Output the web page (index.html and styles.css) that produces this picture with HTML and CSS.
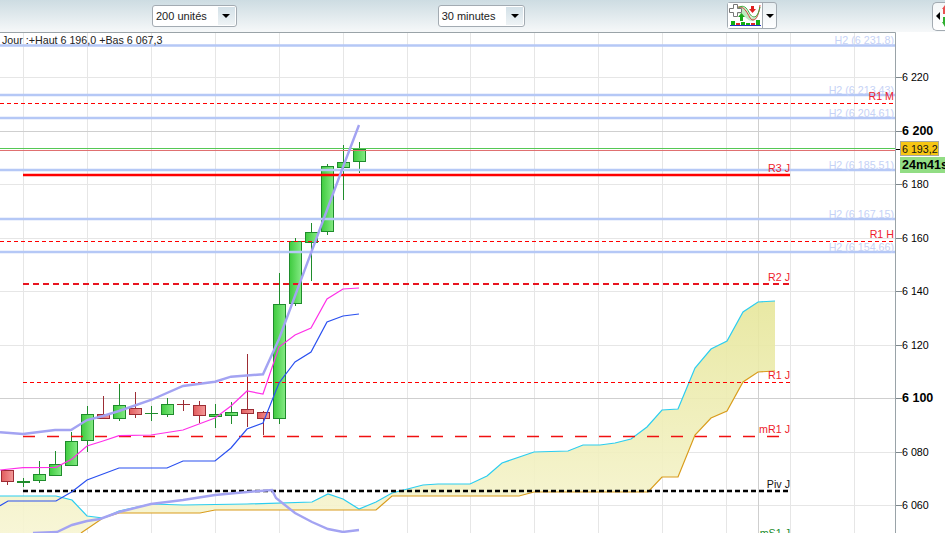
FILE: index.html
```html
<!DOCTYPE html>
<html lang="fr">
<head>
    <meta charset="UTF-8">
    <title>Graphique 30 minutes</title>
    <link rel="stylesheet" href="styles.css">
</head>
<body>
    <!-- Toolbar -->
    <div class="toolbar">
        <div class="select select-units">
            <span>200 unités</span>
            <span class="select-arrow"><i class="caret"></i></span>
        </div>
        <div class="select select-period">
            <span>30 minutes</span>
            <span class="select-arrow"><i class="caret"></i></span>
        </div>
        <div class="indicator-btn">
            <svg class="indicator-icon" width="34" height="25" viewBox="728 4 34 25">
                <path class="ic-area" d="M733 12 C736 6 741 6 745 9 C748 12 750 20 754 19 C757 18 759 12 760 6 L760 10 C758 17 756 22 752 22 C747 22 745 16 741 15 C738 14 735 15 733 17 Z"/>
                <path class="ic-red" d="M736 9 C740 7 743 8 746 12 C749 16 750 21 753 21 C757 21 759 14 760 6"/>
                <path class="ic-green" d="M736 12 C739 7 743 6 746 9 C749 12 750 18 754 18 C757 18 759 13 760 8"/>
                <path class="ic-plus" d="M733.5 5.5 H737.5 V9.5 H741.5 V13.5 H737.5 V17.5 H733.5 V13.5 H729.5 V9.5 H733.5 Z"/>
                <path class="ic-up" d="M741.5 14 L745 18 H743 V22 H740 V18 H738 Z"/>
                <path class="ic-down" d="M751 7 H754 V10 H756 L752.5 14 L749 10 H751 Z"/>
                <rect class="ic-bar-g" x="731" y="22" width="4" height="4"/>
                <rect class="ic-bar-r" x="736" y="24" width="4" height="2"/>
                <rect class="ic-bar-g" x="741" y="23" width="4" height="3"/>
                <rect class="ic-bar-g" x="746" y="24" width="4" height="2"/>
                <rect class="ic-bar-r" x="751" y="24" width="4" height="2"/>
                <rect class="ic-bar-g" x="756" y="21" width="4" height="5"/>
                <rect class="ic-base" x="730" y="26" width="31" height="1"/>
            </svg>
            <span class="indicator-arrow"><i class="caret"></i></span>
        </div>
        <div class="corner-btn">
            <i class="caret-left"></i>
            <svg class="corner-icon" width="6" height="22" viewBox="0 0 6 22">
                <path class="corner-red" d="M3 0 L6 4 V9 H1 V4 H0 Z"/>
                <path class="corner-green" d="M1 12 H6 V17 L3 22 L0 17 H1 Z"/>
            </svg>
        </div>
    </div>

    <!-- Chart -->
    <svg class="chart" width="945" height="501" viewBox="0 32 945 501">
        <defs>
            <linearGradient id="cloud-fill" gradientUnits="userSpaceOnUse" x1="0" y1="300" x2="0" y2="533">
                <stop offset="0" stop-color="#e6e69a"/>
                <stop offset="1" stop-color="#f7f5d2"/>
            </linearGradient>
            <linearGradient id="candle-up">
                <stop offset="0" stop-color="#3fcb3f"/>
                <stop offset="1" stop-color="#84ea84"/>
            </linearGradient>
            <linearGradient id="candle-down">
                <stop offset="0" stop-color="#e25c5c"/>
                <stop offset="1" stop-color="#f39a9a"/>
            </linearGradient>
        </defs>

        <!-- grid -->
        <g class="grid">
            <path d="M23.5 33V533 M87.5 33V533 M151.5 33V533 M215.5 33V533 M279.5 33V533 M343.5 33V533 M407.5 33V533 M470.5 33V533 M534.5 33V533 M598.5 33V533 M662.5 33V533 M726.5 33V533 M790.5 33V533 M854.5 33V533"/>
            <path d="M0 77.5H895 M0 184.5H895 M0 238.5H895 M0 291.5H895 M0 345.5H895 M0 452.5H895 M0 505.5H895"/>
        </g>
        <path class="grid-strong" d="M758.5 33V533 M0 131.5H895 M0 398.5H895"/>

        <!-- ichimoku cloud -->
        <polygon class="cloud" points="0,496 56,496 72,500 87,516 103,518 119,511 151,504 183,505 247,504 312,502 328,494 343,499 359,509 376,502 392,493 423,485 438,484 470,484 487,476 502,463 534,452 568,451 583,445 600,445 615,443 631,439 647,427 662,410 678,409 695,368 711,349 727,341 743,312 758,302 775,301 775,371 758,372 743,382 727,411 711,418 695,435 678,477 662,477 648,492 534,492 519,496 392,496 376,510 215,510 200,513 119,513 103,518 81,533 0,533"/>
        <polyline class="kumo-top" points="0,496 56,496 72,500 87,516 103,518 119,511 151,504 183,505 247,504 312,502 328,494 343,499 359,509 376,502 392,493 423,485 438,484 470,484 487,476 502,463 534,452 568,451 583,445 600,445 615,443 631,439 647,427 662,410 678,409 695,368 711,349 727,341 743,312 758,302 775,301"/>
        <polyline class="kumo-bottom" points="81,533 103,518 119,513 200,513 215,510 376,510 392,496 519,496 534,492 648,492 662,477 678,477 695,435 711,418 727,411 743,382 758,372 775,371"/>

        <!-- candles -->
        <g class="wicks-up">
            <path d="M23.5 478V487 M39.5 461V483 M55.5 451V465 M71.5 432V442 M87.5 406V452 M119.5 384V421 M151.5 406V421 M167.5 398V417 M215.5 404V428 M231.5 402V424 M279.5 273V424 M295.5 238V306 M311.5 223V281 M327.5 164V235 M343.5 145V200 M359.5 142V173"/>
        </g>
        <g class="wicks-down">
            <path d="M7.5 481V485 M103.5 396V415 M135.5 392V418 M183.5 400V411 M199.5 401V423 M247.5 354V427 M263.5 411V435"/>
        </g>
        <g class="bodies-up">
            <rect x="17.5" y="481.5" width="12" height="1"/>
            <rect x="33.5" y="474.5" width="12" height="6"/>
            <rect x="49.5" y="464.5" width="12" height="11"/>
            <rect x="65.5" y="441.5" width="12" height="24"/>
            <rect x="81.5" y="414.5" width="12" height="26"/>
            <rect x="113.5" y="405.5" width="12" height="13"/>
            <rect x="161.5" y="404.5" width="12" height="10"/>
            <rect x="209.5" y="414.5" width="12" height="2"/>
            <rect x="225.5" y="412.5" width="12" height="3"/>
            <rect x="273.5" y="304.5" width="12" height="114"/>
            <rect x="289.5" y="241.5" width="12" height="62"/>
            <rect x="305.5" y="232.5" width="12" height="10"/>
            <rect x="321.5" y="166.5" width="12" height="65"/>
            <rect x="337.5" y="162.5" width="12" height="5"/>
            <rect x="353.5" y="149.5" width="12" height="12"/>
        </g>
        <g class="bodies-down">
            <rect x="1.5" y="470.5" width="12" height="11"/>
            <rect x="97.5" y="414.5" width="12" height="4"/>
            <rect x="129.5" y="408.5" width="12" height="6"/>
            <rect x="193.5" y="405.5" width="12" height="10"/>
            <rect x="241.5" y="409.5" width="12" height="4"/>
            <rect x="257.5" y="412.5" width="12" height="6"/>
        </g>
        <path class="wicks-up" d="M145 413.5H158"/>
        <path class="wicks-down" d="M177 404.5H190"/>

        <!-- levels -->
        <path class="h2-line" d="M0 45.5H895 M0 95H895 M0 118H895 M0 170H895 M0 219H895 M0 252H895"/>
        <path class="level-fine" d="M0 103.5H895 M0 241.5H895 M23 382.5H790"/>
        <path class="price-green" d="M0 148.5H895"/>
        <path class="price-red" d="M0 150.5H895"/>
        <path class="level-r3" d="M23 175H790"/>
        <path class="level-r2" d="M23 284H790"/>
        <path class="level-mr1" d="M23 436.5H780"/>
        <path class="level-piv" d="M23 491H790"/>

        <!-- indicators -->
        <polyline class="line-kijun" points="0,505.7 8,501 56,501 72,491.7 87,480 119,468 167,468 183,461 215,461 231,448 247,429 263,423 279,383 295,362 311,352 327,322 343,316 359,314"/>
        <polyline class="line-tenkan" points="0,470 23,467.7 56,467.3 72,459 87,446 103,441 119,435.7 151,435 183,430 215,418 231,406 247,391 263,394 279,347 295,335 311,328 327,299 343,289 359,288"/>
        <polyline class="line-chikou" points="0,432.3 23,434 55,430 71,430 87,420 103,416 119,411 151,400 183,386 215,381.7 231,376.7 263,374.3 279,339 295,296 311,253 327,210 343,167 359,125"/>
        <polyline class="line-chikou" points="33,533 57,532 72,525 87,521 100,519 119,512 151,504 183,500 215,495 247,492 272,490 276,498 295,513 312,522 328,529 343,532 359,530"/>

        <!-- chart text -->
        <text class="info" x="2" y="44">Jour :+Haut 6 196,0 +Bas 6 067,3</text>
        <g class="lbl-h2">
            <text x="894" y="44">H2 (6 231,8)</text>
            <text x="894" y="94">H2 (6 213,43)</text>
            <text x="894" y="117">H2 (6 204,61)</text>
            <text x="894" y="169">H2 (6 185,51)</text>
            <text x="894" y="218">H2 (6 167,15)</text>
            <text x="894" y="251">H2 (6 154,66)</text>
        </g>
        <g class="lbl-red">
            <text x="894" y="100">R1 M</text>
            <text x="790" y="172">R3 J</text>
            <text x="894" y="238">R1 H</text>
            <text x="790" y="281">R2 J</text>
            <text x="790" y="379">R1 J</text>
            <text x="790" y="433">mR1 J</text>
        </g>
        <text class="lbl-piv" x="790" y="488">Piv J</text>
        <text class="lbl-ms1" x="790" y="537">mS1 J</text>

        <!-- price axis -->
        <path class="axis" d="M0 32.5H895.5V533"/>
        <path class="ticks" d="M896 77.5H902 M896 131.5H902 M896 184.5H902 M896 238.5H902 M896 291.5H902 M896 345.5H902 M896 398.5H902 M896 452.5H902 M896 505.5H902"/>
        <g class="axis-labels">
            <text x="902" y="81">6 220</text>
            <text class="major" x="902" y="135">6 200</text>
            <text x="902" y="188">6 180</text>
            <text x="902" y="242">6 160</text>
            <text x="902" y="295">6 140</text>
            <text x="902" y="349">6 120</text>
            <text class="major" x="902" y="402">6 100</text>
            <text x="902" y="456">6 080</text>
            <text x="902" y="509">6 060</text>
        </g>
        <path class="tick-price" d="M896 149.5H901"/>
        <rect class="tag-price" x="900.5" y="141.5" width="38" height="14"/>
        <text class="tag-price-text" x="902" y="153">6 193,2</text>
        <rect class="tag-timer" x="900" y="157" width="45" height="16"/>
        <text class="tag-timer-text" x="902" y="169">24m41s</text>
    </svg>
</body>
</html>
```

FILE: styles.css
```css
/* Global Styles */
body {
    margin: 0;
    width: 945px;
    height: 533px;
    overflow: hidden;
    background: #fff;
    font-family: 'Liberation Sans', Arial, sans-serif;
    color: #222;
}

/* Toolbar */
.toolbar {
    display: flex;
    align-items: center;
    height: 32px;
    background: linear-gradient(to bottom, #cddce2, #f6f8f9);
}

.select {
    display: flex;
    align-items: center;
    justify-content: space-between;
    box-sizing: border-box;
    height: 22px;
    padding: 0 1px 0 3px;
    background: #fff;
    border: 1px solid #a3abb2;
    border-radius: 3px;
    font-size: 11px;
}

.select-units {
    width: 85px;
    margin-left: 152px;
}

.select-period {
    width: 88px;
    margin-left: 201px;
}

.select-arrow {
    display: flex;
    align-items: center;
    justify-content: center;
    width: 17px;
    height: 18px;
    background: linear-gradient(to bottom, #d3e1e8, #eef3f5);
}

.caret {
    width: 0;
    height: 0;
    border-left: 4px solid transparent;
    border-right: 4px solid transparent;
    border-top: 4px solid #000;
}

.indicator-btn {
    display: flex;
    align-items: stretch;
    box-sizing: border-box;
    width: 50px;
    height: 27px;
    margin-left: 202px;
    margin-bottom: 1px;
    background: linear-gradient(to bottom, #e8eff2, #fff);
    border: 1px solid #a3abb2;
    border-radius: 3px;
}

.indicator-icon {
    flex: none;
    background: #fff;
}

.indicator-arrow {
    display: flex;
    align-items: center;
    justify-content: center;
    flex: 1;
    border-left: 1px solid #a3abb2;
}

.ic-area { fill: #bfe9bf; }
.ic-red, .ic-green { fill: none; stroke-width: 1; }
.ic-red { stroke: #d84040; }
.ic-green { stroke: #3aa83a; }
.ic-plus { fill: #fff; stroke: #777; stroke-width: 1; }
.ic-up { fill: #18a818; }
.ic-down { fill: #e02020; }
.ic-bar-g { fill: #12b012; }
.ic-bar-r { fill: #e02828; }
.ic-base { fill: #2030c0; }

.corner-btn {
    display: flex;
    align-items: center;
    gap: 2px;
    box-sizing: border-box;
    width: 13px;
    height: 29px;
    margin-left: 155px;
    padding-left: 3px;
    background: linear-gradient(to bottom, #f4f7f8, #fff);
    border: 1px solid #a3abb2;
    border-right: 0;
    border-radius: 5px 0 0 5px;
}

.caret-left {
    flex: none;
    width: 0;
    height: 0;
    border-top: 4px solid transparent;
    border-bottom: 4px solid transparent;
    border-right: 4px solid #000;
}

.corner-icon {
    flex: none;
}

.corner-red { fill: #e85050; }
.corner-green { fill: #30b030; }

/* Chart */
.chart {
    display: block;
}

.chart text {
    font-size: 10.7px;
}

.grid path {
    fill: none;
    stroke: #e6e6e6;
}

.grid-strong {
    fill: none;
    stroke: #cfcfcf;
}

.axis {
    fill: none;
    stroke: #9aa3a8;
}

.ticks {
    stroke: #7d878c;
}

.cloud {
    fill: url(#cloud-fill);
    fill-opacity: 0.9;
}

.kumo-top, .kumo-bottom,
.line-kijun, .line-tenkan, .line-chikou {
    fill: none;
}

.kumo-top { stroke: #2bcdf0; stroke-width: 1.2; }
.kumo-bottom { stroke: #d99c1c; stroke-width: 1.2; }
.line-kijun { stroke: #2a50f0; stroke-width: 1.2; }
.line-tenkan { stroke: #ff30e8; stroke-width: 1.2; }
.line-chikou { stroke: #a3a3f2; stroke-width: 2.4; }

.wicks-up, .wicks-up path { fill: none; stroke: #1f8c2c; }
.wicks-down, .wicks-down path { fill: none; stroke: #9c2c34; }

.bodies-up rect {
    fill: url(#candle-up);
    stroke: #1f8c2c;
}

.bodies-down rect {
    fill: url(#candle-down);
    stroke: #9c2c34;
}

/* Levels */
.h2-line { fill: none; stroke: #b5c8f6; stroke-width: 2.4; }
.level-fine { fill: none; stroke: #f00; stroke-dasharray: 4 3; }
.price-green { stroke: #55c855; }
.price-red { stroke: #e07070; }
.level-r3 { stroke: #f00; stroke-width: 2.4; }
.level-r2 { stroke: #e81420; stroke-width: 2; stroke-dasharray: 6 4; }
.level-mr1 { stroke: #f01010; stroke-width: 1.4; stroke-dasharray: 12 12; }
.level-piv { stroke: #000; stroke-width: 2.4; stroke-dasharray: 5 3; }

/* Labels */
.info { fill: #222; }
.lbl-h2 text { fill: #c6d2f6; text-anchor: end; }
.lbl-red text { fill: #ee1c2c; text-anchor: end; }
.lbl-piv { fill: #111; text-anchor: end; }
.lbl-ms1 { fill: #1a8a2a; text-anchor: end; }
.axis-labels text { fill: #000; }
.chart .axis-labels .major { font-size: 12.5px; font-weight: bold; fill: #000; }

.tick-price { stroke: #000; }
.tag-price { fill: #f6c613; stroke: #a8a8a0; }
.tag-price-text { fill: #111; }
.tag-timer { fill: #92dd84; }
.chart .tag-timer-text { fill: #000; font-size: 12.5px; font-weight: bold; }
```
